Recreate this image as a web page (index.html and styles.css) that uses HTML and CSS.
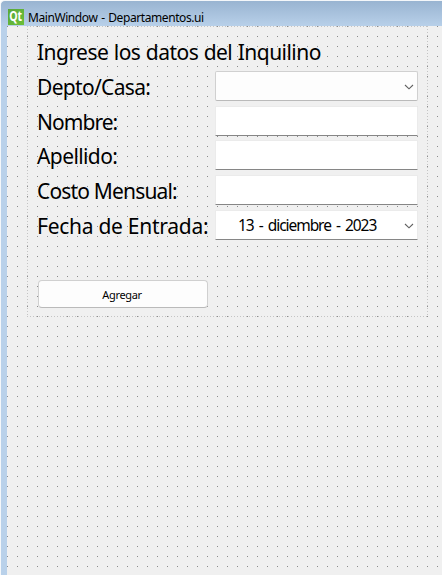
FILE: index.html
```html
<!DOCTYPE html>
<html lang="es">
<head>
<meta charset="utf-8">
<title>MainWindow - Departamentos.ui</title>
<link rel="stylesheet" href="styles.css">
</head>
<body>
<div class="window">
  <header class="titlebar">
    <span class="logo"><span class="logo-text">Qt</span></span>
    <h1 class="title">MainWindow - Departamentos.ui</h1>
  </header>
  <main class="canvas">
    <form class="layout">
      <h2 class="label heading">Ingrese los datos del Inquilino</h2>
      <div class="row"><span class="label depto">Depto/Casa:</span>
        <div class="field combo"><svg class="arrow" viewBox="0 0 10 6"><path d="M1 1L5 4.8L9 1"/></svg></div></div>
      <div class="row short"><span class="label nombre">Nombre:</span><div class="field line"></div></div>
      <div class="row"><span class="label apellido">Apellido:</span><div class="field line"></div></div>
      <div class="row"><span class="label costo">Costo Mensual:</span><div class="field line"></div></div>
      <div class="row"><span class="label fecha">Fecha de Entrada:</span>
        <div class="field line date"><span class="date-text">13 - diciembre - 2023</span><svg class="arrow" viewBox="0 0 10 6"><path d="M1 1L5 4.8L9 1"/></svg></div></div>
      <button class="button" type="button">Agregar</button>
    </form>
  </main>
</div>
</body>
</html>
```

FILE: styles.css
```css
* { box-sizing: border-box; }
body { margin: 0; overflow: hidden; background: #fff; font-family: "Noto Sans", sans-serif; color: #000; }
.window {
  width: 442px; height: 575px;
  display: flex; flex-direction: column;
  background: linear-gradient(#99b4d1, #b9d1ea 26px, #b9d1ea);
  border-left: 1px solid #f4f7fa;
  border-top: 1px solid #f4f7fa;
  border-top-left-radius: 5px;
}
.titlebar { height: 25px; padding: 8px 0 0 7px; display: flex; }
.logo {
  width: 16px; height: 16px; flex: none;
  display: flex; align-items: center; justify-content: center;
  background: linear-gradient(135deg, #58a83a, #6cbf38);
}
.logo-text { color: #fff; font: bold 14px/14px "Open Sans", sans-serif; transform: translateY(-1px) scaleX(0.75); }
.title { margin: 0 0 0 4px; font-size: 12px; line-height: 17px; font-weight: 400; letter-spacing: -0.42px; word-spacing: 1px; white-space: nowrap; }
.canvas {
  flex: 1; margin-left: 6px; padding-left: 20px;
  background: conic-gradient(from 0deg at 1px 1px, transparent 75%, #8c8c8c 0) 0 0 / 10px 10px, #f0f0f0;
}
.layout {
  width: 401px; height: 291px; padding: 10px 9px 0 10px;
  background:
    repeating-linear-gradient(90deg, #c4c4c4 0 1px, transparent 1px 3px) 0 0 / 100% 1px no-repeat,
    repeating-linear-gradient(90deg, #c4c4c4 0 1px, transparent 1px 3px) 0 100% / 100% 1px no-repeat,
    repeating-linear-gradient(#c4c4c4 0 1px, transparent 1px 3px) 0 0 / 1px 100% no-repeat,
    repeating-linear-gradient(#c4c4c4 0 1px, transparent 1px 3px) 100% 0 / 1px 100% no-repeat;
}
.label { font-size: 21px; line-height: 32px; font-weight: 400; white-space: nowrap; }
.heading { margin: 0 0 5px; height: 30px; letter-spacing: -0.54px; word-spacing: 0.6px; }
.depto { letter-spacing: -0.68px; }
.nombre { letter-spacing: -0.95px; }
.apellido { letter-spacing: -0.6px; }
.costo { letter-spacing: -0.83px; }
.fecha { letter-spacing: -0.27px; }
.row { display: flex; height: 30px; margin-bottom: 5px; }
.row.short { margin-bottom: 4px; }
.row .label { width: 178px; flex: none; }
.field { width: 203px; height: 30px; display: flex; align-items: center; justify-content: flex-end; padding-right: 3px; }
.combo { background: #fdfdfd; border: 1px solid #d0d0d0; border-bottom-color: #bababa; border-radius: 2px; }
.line { background: #fff; border: 1px solid #ebebeb; border-bottom: 1px solid #868686; border-radius: 1px; }
.arrow { width: 10px; height: 6px; flex: none; margin-top: 1px; fill: none; stroke: #606060; stroke-width: 1.1; }
.date-text { font-size: 15.5px; line-height: 28px; flex: 1; padding: 0 0 0 22px; letter-spacing: -1.05px; word-spacing: 2.1px; white-space: nowrap; }
.button {
  display: block; width: 170px; height: 28px; margin: 40px 0 0 1px; padding: 2px 2px 0 0;
  background: #fdfdfd; border: 1px solid #d0d0d0; border-bottom-color: #bababa; border-radius: 4px;
  font: 11px/16px "Noto Sans", sans-serif; letter-spacing: -0.35px; color: #000;
}
```
